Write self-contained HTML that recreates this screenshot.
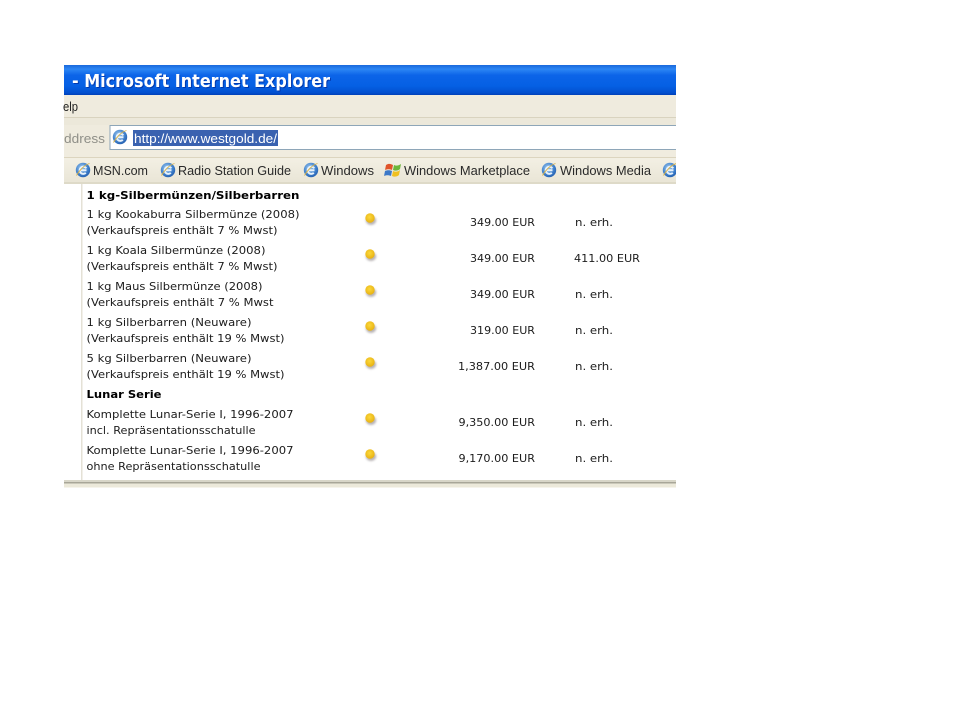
<!DOCTYPE html>
<html><head><meta charset="utf-8"><style>
html,body{margin:0;padding:0;background:#fff;width:960px;height:720px;overflow:hidden}
svg{display:block;filter:blur(.35px)}
text{font-family:"DejaVu Sans","Liberation Sans",sans-serif;font-size:11px;fill:#1c1c1c}
.b{font-weight:bold;fill:#000}
.t{font-family:"Liberation Sans",sans-serif;font-size:13px;fill:#2a2a2a}
</style></head><body>
<svg width="960" height="720" viewBox="0 0 960 720" xmlns="http://www.w3.org/2000/svg">
<defs>
<linearGradient id="tb" x1="0" y1="0" x2="0" y2="1">
<stop offset="0" stop-color="#1a68dc"/><stop offset=".14" stop-color="#2c86f4"/><stop offset=".34" stop-color="#0c64e8"/><stop offset=".7" stop-color="#0560e4"/><stop offset=".92" stop-color="#0250d0"/><stop offset="1" stop-color="#0140b8"/>
</linearGradient>
<linearGradient id="bar" x1="0" y1="0" x2="0" y2="1"><stop offset="0" stop-color="#f6f3e8"/><stop offset="1" stop-color="#e9e5d6"/></linearGradient>
<radialGradient id="ie" cx=".4" cy=".35" r=".75"><stop offset="0" stop-color="#9cc8ee"/><stop offset=".6" stop-color="#3f80cc"/><stop offset="1" stop-color="#1f58a8"/></radialGradient>
<radialGradient id="dot" cx=".45" cy=".4" r=".6"><stop offset="0" stop-color="#fbd83c"/><stop offset="1" stop-color="#e8b212"/></radialGradient>
<filter id="sh" x="-50%" y="-50%" width="200%" height="200%"><feGaussianBlur stdDeviation="1"/></filter>
<symbol id="e" viewBox="0 0 16 16" overflow="visible">
<circle cx="8" cy="8" r="7.2" fill="url(#ie)"/>
<path d="M4.500 8.200h7M11.300 6.400A3.600 3.600 0 1 0 10.800 10.800" fill="none" stroke="#e8f2fb" stroke-width="2"/>
<path d="M1.500 13.500C4 9 9 3 14.500 1.500" fill="none" stroke="#d8b24a" stroke-width=".9"/>
</symbol>
<g id="d"><ellipse cx="1" cy="2.500" rx="5.200" ry="4.500" fill="#a09a9c" opacity=".75" filter="url(#sh)"/><circle cx="0" cy="0" r="4.700" fill="url(#dot)"/></g>
</defs>

<!-- title bar -->
<rect x="64" y="65" width="612" height="30" fill="url(#tb)"/>
<text x="72" y="87" textLength="258" lengthAdjust="spacingAndGlyphs" style="font-family:'DejaVu Sans',sans-serif;font-weight:bold;font-size:17.500px;fill:#00208a;opacity:.6" transform="translate(1,1)">- Microsoft Internet Explorer</text>
<text x="72" y="87" textLength="258" lengthAdjust="spacingAndGlyphs" style="font-family:'DejaVu Sans',sans-serif;font-weight:bold;font-size:17.500px;fill:#fff">- Microsoft Internet Explorer</text>

<!-- menu -->
<rect x="64" y="95" width="612" height="22" fill="#efebde"/>
<rect x="64" y="117" width="612" height="1" fill="#d9d3bf"/>
<text class="t" x="63" y="111" textLength="15" lengthAdjust="spacingAndGlyphs" style="fill:#222">elp</text>

<!-- address -->
<rect x="64" y="118" width="612" height="32" fill="#efebde"/>
<rect x="64" y="118" width="612" height="7" fill="#ece8da"/>
<text class="t" x="64" y="143" textLength="41" lengthAdjust="spacingAndGlyphs" style="fill:#8f8f88">ddress</text>
<clipPath id="ac"><rect x="64" y="118" width="612" height="32"/></clipPath>
<g clip-path="url(#ac)"><rect x="110" y="125.500" width="570" height="24" fill="#fff" stroke="#8ea6b8" stroke-width="1"/></g>
<use href="#e" x="112" y="129" width="16" height="16"/>
<rect x="133" y="130" width="145" height="16" fill="#3a62b0"/>
<text class="t" x="134" y="143" textLength="143" lengthAdjust="spacingAndGlyphs" style="fill:#fff">http://www.westgold.de/</text>

<!-- links -->
<rect x="64" y="150" width="612" height="33" fill="url(#bar)"/>
<rect x="64" y="150" width="612" height="7" fill="#f0ecdf"/>
<rect x="64" y="157" width="612" height="1" fill="#dcd5bf"/>
<rect x="64" y="182" width="612" height="2" fill="#dedac8"/>
<use href="#e" x="75" y="162" width="16" height="16"/>
<text class="t" x="93" y="175" textLength="55" lengthAdjust="spacingAndGlyphs">MSN.com</text>
<use href="#e" x="160" y="162" width="16" height="16"/>
<text class="t" x="178" y="175" textLength="113" lengthAdjust="spacingAndGlyphs">Radio Station Guide</text>
<use href="#e" x="303" y="162" width="16" height="16"/>
<text class="t" x="321" y="175" textLength="53" lengthAdjust="spacingAndGlyphs">Windows</text>
<g>
<path d="M386 165c3-2 5-1 7 0l-1 5c-2-1-5-1-7 0z" fill="#e0542a"/>
<path d="M394 165c2 1 4 1 7-1l-1 5c-2 2-5 2-7 1z" fill="#6cb63a"/>
<path d="M385 171c2-1 5-1 7 0l-1 5c-2-1-5-1-7 0z" fill="#3c78c8"/>
<path d="M393 171c2 1 5 1 7-1l-1 5c-2 2-5 2-7 1z" fill="#f0c020"/>
</g>
<text class="t" x="404" y="175" textLength="126" lengthAdjust="spacingAndGlyphs">Windows Marketplace</text>
<use href="#e" x="541" y="162" width="16" height="16"/>
<text class="t" x="560" y="175" textLength="91" lengthAdjust="spacingAndGlyphs">Windows Media</text>
<clipPath id="c"><rect x="660" y="150" width="16" height="33"/></clipPath>
<g clip-path="url(#c)"><use href="#e" x="662" y="162" width="16" height="16"/></g>

<!-- content frame -->
<rect x="81" y="184" width="1.500" height="296" fill="#e4e1d6"/>

<text class="b" x="86.500" y="199" textLength="213" lengthAdjust="spacingAndGlyphs">1 kg-Silbermünzen/Silberbarren</text>

<text x="86.500" y="218" textLength="213" lengthAdjust="spacingAndGlyphs">1 kg Kookaburra Silbermünze (2008)</text>
<text x="86.500" y="234" textLength="191" lengthAdjust="spacingAndGlyphs">(Verkaufspreis enthält 7 % Mwst)</text>
<use href="#d" x="370" y="218"/>
<text x="470" y="226" textLength="65" lengthAdjust="spacingAndGlyphs">349.00 EUR</text>
<text x="575" y="226" textLength="38" lengthAdjust="spacingAndGlyphs">n. erh.</text>

<text x="86.500" y="254" textLength="179" lengthAdjust="spacingAndGlyphs">1 kg Koala Silbermünze (2008)</text>
<text x="86.500" y="270" textLength="191" lengthAdjust="spacingAndGlyphs">(Verkaufspreis enthält 7 % Mwst)</text>
<use href="#d" x="370" y="254"/>
<text x="470" y="262" textLength="65" lengthAdjust="spacingAndGlyphs">349.00 EUR</text>
<text x="574" y="262" textLength="66" lengthAdjust="spacingAndGlyphs">411.00 EUR</text>

<text x="86.500" y="290" textLength="176" lengthAdjust="spacingAndGlyphs">1 kg Maus Silbermünze (2008)</text>
<text x="86.500" y="306" textLength="187" lengthAdjust="spacingAndGlyphs">(Verkaufspreis enthält 7 % Mwst</text>
<use href="#d" x="370" y="290"/>
<text x="470" y="298" textLength="65" lengthAdjust="spacingAndGlyphs">349.00 EUR</text>
<text x="575" y="298" textLength="38" lengthAdjust="spacingAndGlyphs">n. erh.</text>

<text x="86.500" y="326" textLength="165" lengthAdjust="spacingAndGlyphs">1 kg Silberbarren (Neuware)</text>
<text x="86.500" y="342" textLength="198" lengthAdjust="spacingAndGlyphs">(Verkaufspreis enthält 19 % Mwst)</text>
<use href="#d" x="370" y="326"/>
<text x="470" y="334" textLength="65" lengthAdjust="spacingAndGlyphs">319.00 EUR</text>
<text x="575" y="334" textLength="38" lengthAdjust="spacingAndGlyphs">n. erh.</text>

<text x="86.500" y="362" textLength="165" lengthAdjust="spacingAndGlyphs">5 kg Silberbarren (Neuware)</text>
<text x="86.500" y="378" textLength="198" lengthAdjust="spacingAndGlyphs">(Verkaufspreis enthält 19 % Mwst)</text>
<use href="#d" x="370" y="362"/>
<text x="458" y="370" textLength="77" lengthAdjust="spacingAndGlyphs">1,387.00 EUR</text>
<text x="575" y="370" textLength="38" lengthAdjust="spacingAndGlyphs">n. erh.</text>

<text class="b" x="86.500" y="398" textLength="75" lengthAdjust="spacingAndGlyphs">Lunar Serie</text>

<text x="86.500" y="418" textLength="207" lengthAdjust="spacingAndGlyphs">Komplette Lunar-Serie I, 1996-2007</text>
<text x="86.500" y="434" textLength="169" lengthAdjust="spacingAndGlyphs">incl. Repräsentationsschatulle</text>
<use href="#d" x="370" y="418"/>
<text x="458.500" y="426" textLength="76.500" lengthAdjust="spacingAndGlyphs">9,350.00 EUR</text>
<text x="575" y="426" textLength="38" lengthAdjust="spacingAndGlyphs">n. erh.</text>

<text x="86.500" y="454" textLength="207" lengthAdjust="spacingAndGlyphs">Komplette Lunar-Serie I, 1996-2007</text>
<text x="86.500" y="470" textLength="174" lengthAdjust="spacingAndGlyphs">ohne Repräsentationsschatulle</text>
<use href="#d" x="370" y="454"/>
<text x="458.500" y="462" textLength="76.500" lengthAdjust="spacingAndGlyphs">9,170.00 EUR</text>
<text x="575" y="462" textLength="38" lengthAdjust="spacingAndGlyphs">n. erh.</text>

<!-- bottom bar -->
<rect x="64" y="480" width="612" height="2" fill="#d8d6c8"/>
<rect x="64" y="482" width="612" height="1.500" fill="#a8a698"/>
<rect x="64" y="483.500" width="612" height="4" fill="#ece9da"/>
</svg>
</body></html>
